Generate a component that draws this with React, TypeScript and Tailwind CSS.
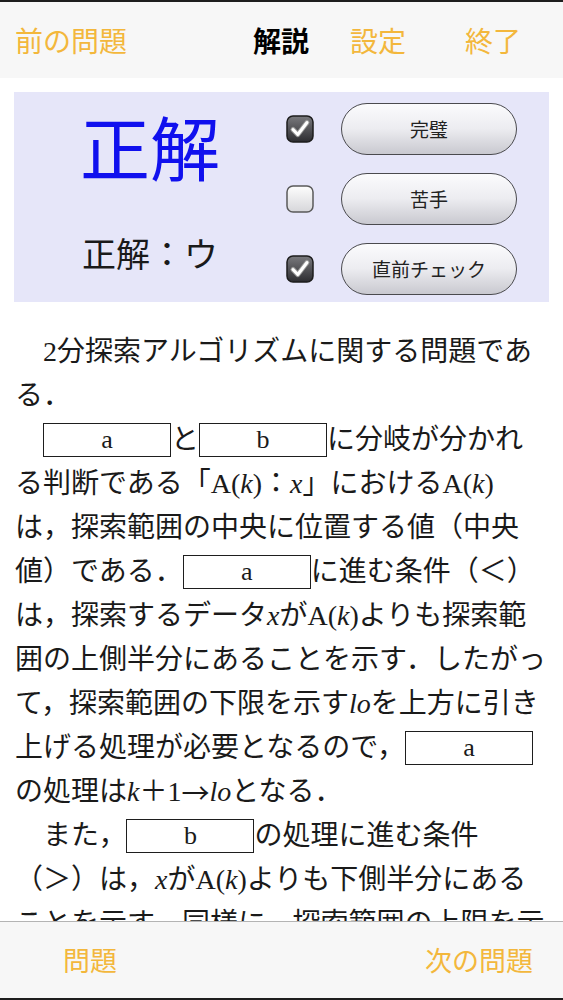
import React from "react";

const Blank = ({ label }: { label: string }) => (
  <span className="inline-flex items-center justify-center w-[128px] h-[34px] border-[1.5px] border-[#1e1e1e] text-[26px] leading-none font-['Liberation_Serif',serif] shrink-0">
    {label}
  </span>
);

const I = ({ children }: { children: React.ReactNode }) => (
  <span className="italic font-['Liberation_Serif',serif]">{children}</span>
);

const Ak = () => (
  <span className="font-['Liberation_Serif',serif]">
    A(<I>k</I>)
  </span>
);

const Line = ({ children, indent }: { children: React.ReactNode; indent?: boolean }) => (
  <div className={`flex items-center h-[44px] whitespace-pre ${indent ? "pl-[28px]" : ""}`}>{children}</div>
);

const CheckBox = ({ checked }: { checked: boolean }) => (
  <svg width="28" height="28" viewBox="0 0 28 28" className="shrink-0">
    <defs>
      <linearGradient id="cbOn" x1="0" y1="0" x2="0" y2="1">
        <stop offset="0" stopColor="#7a7a7e" />
        <stop offset="1" stopColor="#2c2c30" />
      </linearGradient>
      <linearGradient id="cbOff" x1="0" y1="0" x2="0" y2="1">
        <stop offset="0" stopColor="#fdfdfd" />
        <stop offset="1" stopColor="#d6d6da" />
      </linearGradient>
    </defs>
    {checked ? (
      <>
        <rect x="1" y="1" width="26" height="26" rx="6" fill="url(#cbOn)" stroke="#1c1c1c" strokeWidth="1.5" />
        <path d="M7 14.5 L11.8 19.5 L21 7.5" fill="none" stroke="#9a9a9a" strokeWidth="5" strokeLinecap="round" strokeLinejoin="round" />
        <path d="M7 14.5 L11.8 19.5 L21 7.5" fill="none" stroke="#ffffff" strokeWidth="3" strokeLinecap="round" strokeLinejoin="round" />
      </>
    ) : (
      <rect x="1" y="1" width="26" height="26" rx="6" fill="url(#cbOff)" stroke="#5a5a5a" strokeWidth="1.5" />
    )}
  </svg>
);

const PillButton = ({ label }: { label: string }) => (
  <div className="ml-[27px] w-[176px] h-[52px] rounded-full border-[1.5px] border-[#4a4a4e] bg-gradient-to-b from-[#fbfbfd] via-[#ececf0] to-[#c9c9d0] flex items-center justify-center text-[19px] text-[#222]">
    {label}
  </div>
);

export default function App() {
  return (
    <div className="w-full h-[1000px] flex flex-col overflow-hidden bg-white font-['Noto_Sans_CJK_JP',sans-serif]">
      <div className="h-[2px] bg-[#1e1e1e] shrink-0" />
      <div className="h-[76px] bg-[#f7f7f7] flex items-center text-[28px] text-[#f3b73c] shrink-0">
        <span className="ml-[15px] w-[238px]">前の問題</span>
        <span className="w-[97px] text-black font-bold">解説</span>
        <span className="w-[115px]">設定</span>
        <span>終了</span>
      </div>

      <div className="flex-1 overflow-hidden">
        <div className="mt-[14px] mx-[14px] h-[210px] bg-[#e6e6f9] flex">
          <div className="w-[272px] shrink-0 flex flex-col items-center">
            <div className="mt-[14px] text-[70px] leading-[80px] text-[#1010ee]">正解</div>
            <div className="mt-[47px] text-[34px] leading-[40px] text-[#1a1a1a]">正解：ウ</div>
          </div>
          <div className="flex flex-col pt-[11px] gap-[18px]">
            <div className="flex items-center">
              <CheckBox checked />
              <PillButton label="完璧" />
            </div>
            <div className="flex items-center">
              <CheckBox checked={false} />
              <PillButton label="苦手" />
            </div>
            <div className="flex items-center">
              <CheckBox checked />
              <PillButton label="直前チェック" />
            </div>
          </div>
        </div>

        <div className="pt-[28px] pl-[15px] text-[28px] text-[#1a1a1a] font-['Liberation_Serif','Noto_Sans_CJK_JP',serif]">
          <Line indent>2分探索アルゴリズムに関する問題であ</Line>
          <Line>る．</Line>
          <Line indent>
            <Blank label="a" />と<Blank label="b" />に分岐が分かれ
          </Line>
          <Line>
            る判断である「<Ak />：<I>x</I>」における<Ak />
          </Line>
          <Line>は，探索範囲の中央に位置する値（中央</Line>
          <Line>
            値）である．<Blank label="a" />に進む条件（＜）
          </Line>
          <Line>
            は，探索するデータ<I>x</I>が<Ak />よりも探索範
          </Line>
          <Line>囲の上側半分にあることを示す．したがっ</Line>
          <Line>
            て，探索範囲の下限を示す<I>lo</I>を上方に引き
          </Line>
          <Line>
            上げる処理が必要となるので，<Blank label="a" />
          </Line>
          <Line>
            の処理は<I>k</I>＋1<span className="font-['Noto_Sans_CJK_JP',sans-serif]">→</span><I>lo</I>となる．
          </Line>
          <Line indent>
            また，<Blank label="b" />の処理に進む条件
          </Line>
          <Line>
            （＞）は，<I>x</I>が<Ak />よりも下側半分にある
          </Line>
          <Line>ことを示す．同様に，探索範囲の上限を示</Line>
        </div>
      </div>

      <div className="h-[77px] shrink-0 bg-[#f7f7f7] border-t border-[#b4b4b4] flex items-center justify-between text-[27px] text-[#f3b73c]">
        <span className="ml-[63px]">問題</span>
        <span className="mr-[30px]">次の問題</span>
      </div>
      <div className="h-[2px] bg-[#1e1e1e] shrink-0" />
    </div>
  );
}
